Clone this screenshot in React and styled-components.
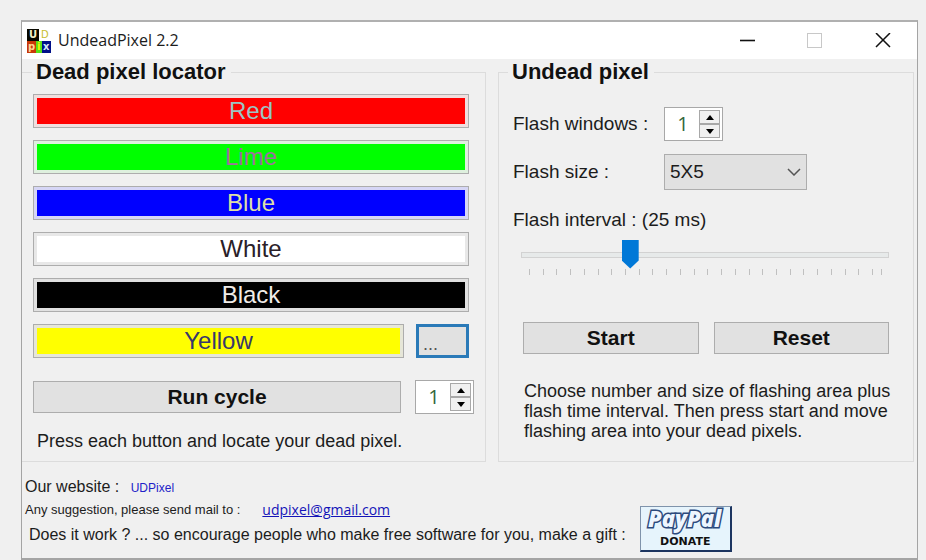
import React, { useState } from "react";
import styled, { createGlobalStyle } from "styled-components";

const COLORS = [
  { name: "Red", bg: "#ff0000", text: "#9cc4c4", frame: "#f0dede" },
  { name: "Lime", bg: "#00ff00", text: "#a070a0", frame: "#def0de" },
  { name: "Blue", bg: "#0000ff", text: "#dedea8", frame: "#d6d6f6" },
  { name: "White", bg: "#ffffff", text: "#2a2028", frame: "#e8e8e8" },
  { name: "Black", bg: "#000000", text: "#f0ece8", frame: "#e1e1e1" },
];

const MIN_INTERVAL = 3;
const MAX_INTERVAL = 80;
const TICKS = Array.from({ length: 25 }, (_, i) => i);

const Spinner = ({ label, value, onChange }) => (
  <SpinBox>
    <SpinInput
      type="number"
      aria-label={label}
      min="1"
      value={value}
      onChange={(event) => onChange(Number(event.target.value))}
    />
    <SpinButtons>
      <SpinButton aria-label="Increase" onClick={() => onChange(value + 1)}>
        <svg width="8" height="5" viewBox="0 0 8 5">
          <path d="M4 0L8 5H0Z" />
        </svg>
      </SpinButton>
      <SpinButton
        aria-label="Decrease"
        onClick={() => onChange(Math.max(1, value - 1))}
      >
        <svg width="8" height="5" viewBox="0 0 8 5">
          <path d="M4 5L8 0H0Z" />
        </svg>
      </SpinButton>
    </SpinButtons>
  </SpinBox>
);

const AppIcon = () => (
  <svg
    width="24"
    height="24"
    viewBox="0 0 24 24"
    fontFamily="DejaVu Sans"
    fontSize="10"
    fontWeight="bold"
  >
    <rect width="12" height="12" fill="#080800" />
    <rect y="12" width="9" height="12" fill="#c83808" />
    <rect x="9" y="12" width="6" height="12" fill="#58e018" />
    <rect x="15" y="12" width="9" height="12" fill="#001088" />
    <text x="2" y="9" fill="#f4f0c8">U</text>
    <text x="14" y="9" fontWeight="normal" fill="#c8c030">D</text>
    <text x="1" y="21" fill="#ffd890">p</text>
    <text x="10" y="21" fill="#e8f800">i</text>
    <text x="16" y="21" fill="#d8e8f8">x</text>
  </svg>
);

const App = () => {
  const [flashWindows, setFlashWindows] = useState(1);
  const [cycles, setCycles] = useState(1);
  const [size, setSize] = useState("5X5");
  const [interval, setFlashInterval] = useState(25);

  const handleReset = () => {
    setFlashWindows(1);
    setSize("5X5");
    setFlashInterval(25);
  };

  return (
    <Page>
      <GlobalStyle />
      <Window>
        <TitleBar>
          <AppIcon />
          <Title>UndeadPixel 2.2</Title>
          <WindowButton aria-label="Minimize">
            <svg width="16" height="16" viewBox="0 0 16 16">
              <path d="M1 7.5H16" stroke="#111" strokeWidth="1.6" />
            </svg>
          </WindowButton>
          <WindowButton aria-label="Maximize" disabled>
            <svg width="16" height="16" viewBox="0 0 16 16">
              <rect x="0.5" y="0.5" width="14" height="14" fill="none" stroke="#c8c8c8" />
            </svg>
          </WindowButton>
          <WindowButton aria-label="Close">
            <svg width="16" height="16" viewBox="0 0 16 16">
              <path d="M1 0L15 14M15 0L1 14" stroke="#111" strokeWidth="1.5" />
            </svg>
          </WindowButton>
        </TitleBar>

        <Groups>
          <LocatorGroup>
            <Legend>Dead pixel locator</Legend>
            <ColorList>
              {COLORS.map((item) => (
                <ColorButton
                  key={item.name}
                  $bg={item.bg}
                  $text={item.text}
                  $frame={item.frame}
                >
                  {item.name}
                </ColorButton>
              ))}
              <CustomRow>
                <ColorButton $bg="#ffff00" $text="#38386c" $frame="#e6e6d8">
                  Yellow
                </ColorButton>
                <PickButton aria-label="Choose color">...</PickButton>
              </CustomRow>
            </ColorList>
            <CycleRow>
              <PushButton>Run cycle</PushButton>
              <Spinner label="Cycles" value={cycles} onChange={setCycles} />
            </CycleRow>
            <LocatorHint>Press each button and locate your dead pixel.</LocatorHint>
          </LocatorGroup>

          <FlashGroup>
            <Legend>Undead pixel</Legend>
            <Fields>
              <span>Flash windows :</span>
              <Spinner
                label="Flash windows"
                value={flashWindows}
                onChange={setFlashWindows}
              />
              <label htmlFor="size">Flash size :</label>
              <SelectBox>
                <Select
                  id="size"
                  value={size}
                  onChange={(event) => setSize(event.target.value)}
                >
                  <option>3X3</option>
                  <option>5X5</option>
                  <option>7X7</option>
                </Select>
                <svg width="14" height="8" viewBox="0 0 14 8">
                  <path d="M1 1L7 7L13 1" fill="none" stroke="#555" strokeWidth="1.5" />
                </svg>
              </SelectBox>
            </Fields>
            <IntervalLabel htmlFor="interval">
              Flash interval : ({interval} ms)
            </IntervalLabel>
            <SliderArea>
              <Slider
                id="interval"
                type="range"
                min={MIN_INTERVAL}
                max={MAX_INTERVAL}
                value={interval}
                onChange={(event) => setFlashInterval(Number(event.target.value))}
              />
              <TickRow>
                {TICKS.map((i) => (
                  <Tick key={i} />
                ))}
                <LastTick />
              </TickRow>
            </SliderArea>
            <ButtonRow>
              <PushButton>Start</PushButton>
              <PushButton onClick={handleReset}>Reset</PushButton>
            </ButtonRow>
            <FlashHint>
              Choose number and size of flashing area plus
              <br />
              flash time interval. Then press start and move
              <br />
              flashing area into your dead pixels.
            </FlashHint>
          </FlashGroup>
        </Groups>

        <Footer>
          <FooterLines>
            <Website>
              Our website : <SmallLink href="#website">UDPixel</SmallLink>
            </Website>
            <Mail>
              Any suggestion, please send mail to :
              <MailLink href="mailto:udpixel@gmail.com">udpixel@gmail.com</MailLink>
            </Mail>
            <Gift>
              Does it work ? ... so encourage people who make free software for
              you, make a gift :
            </Gift>
          </FooterLines>
          <DonateButton>
            <PayPalLogo width="84" height="27" viewBox="0 0 84 27">
              <text x="5" y="18">PayPal</text>
            </PayPalLogo>
            DONATE
          </DonateButton>
        </Footer>
      </Window>
    </Page>
  );
};

export default App;

const GlobalStyle = createGlobalStyle`
  * {
    box-sizing: border-box;
  }

  body {
    margin: 0;
    background: #f0f0f0;
    color: #1c1c1c;
    font-family: "Liberation Sans", Arial, sans-serif;
    font-size: 18px;
    line-height: 20px;
  }

  button, input, select {
    margin: 0;
    padding: 0;
    border-radius: 0;
    font: inherit;
    color: inherit;
  }

  p {
    margin: 0;
  }

  svg {
    display: block;
    flex: none;
  }
`;

const Page = styled.div`
  padding: 20px 8px 0 21px;
`;

const Window = styled.main`
  border: 1px solid #a4a4a4;
  border-top: 2px solid #b0b0b0;
  border-bottom-width: 2px;
`;

const TitleBar = styled.header`
  display: flex;
  align-items: center;
  height: 37px;
  padding-left: 5px;
  background: #fff;
`;

const Title = styled.h1`
  flex: 1;
  margin: 0 0 2px 7px;
  font-family: "Open Sans", "Noto Sans", sans-serif;
  font-size: 16px;
  font-weight: 400;
`;

const WindowButton = styled.button`
  display: flex;
  align-items: center;
  justify-content: center;
  width: 68px;
  height: 37px;
  border: none;
  background: none;
`;

const Groups = styled.div`
  display: grid;
  grid-template-columns: 464fr 416fr;
  gap: 12px;
  padding: 1px 3px 0 0;
`;

const Group = styled.fieldset`
  min-width: 0;
  margin: 0;
  border: 1px solid #dcdcdc;
`;

const LocatorGroup = styled(Group)`
  padding: 10px 11px 10px 10px;
  border-left: none;
`;

const FlashGroup = styled(Group)`
  padding: 23px 24px 10px 9px;
`;

const Legend = styled.legend`
  padding: 0 5px 0 4px;
  color: #111;
  font-size: 22px;
  font-weight: bold;
  line-height: 24px;
`;

const ColorList = styled.div`
  display: flex;
  flex-direction: column;
  gap: 12px;
  padding: 0 5px 0 1px;
`;

const ColorButton = styled.button`
  flex: 1;
  min-height: 34px;
  border: 1px solid #adadad;
  background: ${(props) => props.$bg};
  box-shadow: inset 0 0 0 3px ${(props) => props.$frame};
  color: ${(props) => props.$text};
  font-size: 24px;
  line-height: 30px;
`;

const CustomRow = styled.div`
  display: flex;
  gap: 12px;
`;

const PickButton = styled.button`
  width: 53px;
  height: 34px;
  padding: 6px 0 0 4px;
  border: 3px solid #2a7ab8;
  background: #e1e1e1;
  color: #555;
  text-align: left;
`;

const CycleRow = styled.div`
  display: flex;
  align-items: center;
  gap: 14px;
  margin-top: 22px;
  padding-left: 1px;
`;

const PushButton = styled.button`
  flex: 1;
  height: 32px;
  border: 1px solid #adadad;
  background: #e1e1e1;
  color: #111;
  font-size: 21px;
  font-weight: bold;
`;

const SpinBox = styled.div`
  display: flex;
  width: 59px;
  height: 34px;
  padding: 2px;
  border: 1px solid #a8a8a8;
  background: #fff;
`;

const SpinInput = styled.input`
  flex: 1;
  min-width: 0;
  height: 26px;
  border: none;
  background: none;
  color: #34663c;
  font-family: "Open Sans", "Noto Sans", sans-serif;
  font-size: 20px;
  text-align: center;
  appearance: textfield;

  &::-webkit-inner-spin-button {
    appearance: none;
    margin: 0;
  }
`;

const SpinButtons = styled.div`
  display: flex;
  flex-direction: column;
  width: 21px;
`;

const SpinButton = styled.button`
  display: flex;
  flex: 1;
  align-items: center;
  justify-content: center;
  border: 1px solid #a8a8a8;
  background: #f0f0f0;
`;

const LocatorHint = styled.p`
  margin-top: 17px;
  padding-left: 5px;
`;

const Fields = styled.div`
  display: grid;
  grid-template-columns: 151px 1fr;
  align-items: center;
  row-gap: 13px;
  padding-left: 5px;
  font-size: 19px;
`;

const SelectBox = styled.div`
  display: grid;
  align-items: center;
  width: 143px;

  svg {
    grid-area: 1 / 1;
    justify-self: end;
    margin-right: 6px;
    pointer-events: none;
  }
`;

const Select = styled.select`
  grid-area: 1 / 1;
  height: 36px;
  padding-left: 5px;
  border: 1px solid #adadad;
  background: #e1e1e1;
  font-size: 19px;
  appearance: none;
`;

const IntervalLabel = styled.label`
  display: block;
  margin-top: 20px;
  padding-left: 5px;
  font-size: 19px;
`;

const SliderArea = styled.div`
  margin: 10px 0 0 13px;
`;

const Slider = styled.input`
  display: block;
  width: 100%;
  height: 29px;
  background: none;
  appearance: none;

  &::-webkit-slider-runnable-track {
    height: 6px;
    border: 1px solid #d2d2d2;
    background: #e7eaea;
  }

  &::-webkit-slider-thumb {
    width: 17px;
    height: 29px;
    margin-top: -13px;
    background: #0078d7;
    clip-path: polygon(0 0, 100% 0, 100% 72%, 50% 100%, 0 72%);
    appearance: none;
  }
`;

const TickRow = styled.div`
  display: flex;
  height: 6px;
  padding: 0 7px 0 8px;
`;

const Tick = styled.span`
  flex: 1;
  border-left: 1px solid #c0c0c0;
`;

const LastTick = styled.span`
  width: 10px;
  border: solid #c0c0c0;
  border-width: 0 1px;
`;

const ButtonRow = styled.div`
  display: flex;
  gap: 15px;
  margin-top: 47px;
  padding-left: 15px;
`;

const FlashHint = styled.p`
  margin-top: 27px;
  padding-left: 16px;
  white-space: nowrap;
`;

const Footer = styled.footer`
  display: flex;
  align-items: flex-end;
  gap: 14px;
  padding: 15px 0 6px 3px;
`;

const FooterLines = styled.div`
  padding-bottom: 7px;
`;

const Website = styled.p`
  font-size: 16px;
`;

const SmallLink = styled.a`
  margin-left: 7px;
  color: #2222c8;
  font-size: 12px;
  text-decoration: none;
`;

const Mail = styled.p`
  display: flex;
  gap: 22px;
  margin-top: 2px;
  font-size: 13px;
`;

const MailLink = styled.a`
  color: #1414b8;
  font-family: "Open Sans", "Noto Sans", sans-serif;
  font-size: 14px;
`;

const Gift = styled.p`
  margin-top: 5px;
  padding-left: 4px;
  font-size: 16px;
`;

const DonateButton = styled.button`
  display: flex;
  flex-direction: column;
  align-items: center;
  width: 92px;
  height: 46px;
  padding-top: 2px;
  border: 1px solid #7f93ab;
  border-right: 2px solid #1c3560;
  border-bottom: 2px solid #1c3560;
  background: #e6f4fc;
  color: #111;
  font-family: "DejaVu Sans", sans-serif;
  font-size: 11px;
  font-weight: bold;
  line-height: 12px;
`;

const PayPalLogo = styled.svg`
  overflow: visible;
  fill: #eef6ff;
  stroke: #2c4a7c;
  stroke-width: 3px;
  paint-order: stroke;
  font-family: "Open Sans", sans-serif;
  font-size: 22px;
  font-style: italic;
  font-weight: 800;
`;
